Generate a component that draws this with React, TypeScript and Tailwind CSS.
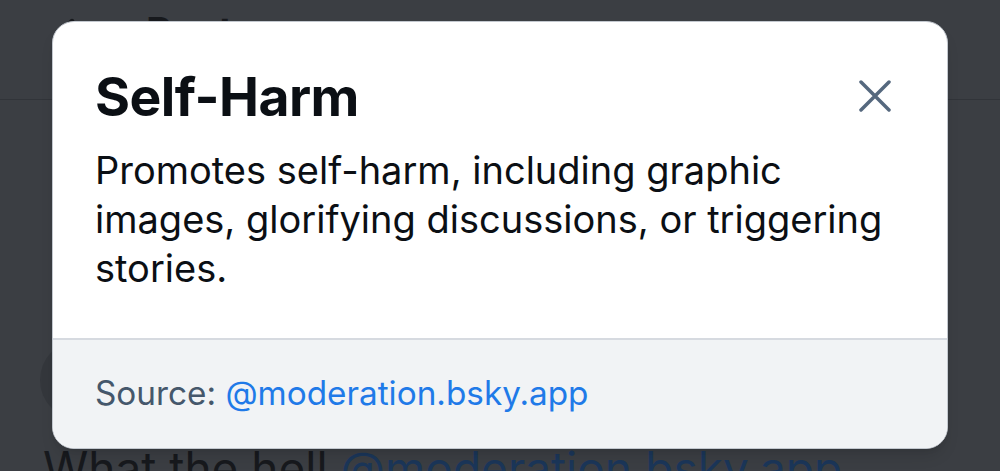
import { ArrowLeft, Ellipsis } from 'lucide-react';

export default function App() {
    return (
        <div className="relative w-[1000px] h-[471px] overflow-hidden bg-[#3b3e43] font-['Inter',sans-serif]">
            {/* dimmed page behind */}
            <div className="flex items-start h-[100px] border-b border-[#313439] pl-[52px] pr-[60px] pt-[12px] text-[#17191d]">
                <ArrowLeft size={40} strokeWidth={3} className="mt-[1px]" />
                <span className="ml-[54px] text-[40px] font-bold leading-none">Post</span>
                <Ellipsis size={44} strokeWidth={3.5} className="ml-auto -mt-[2px]" />
            </div>
            <div className="flex items-start px-[40px] pt-[240px]">
                <div className="w-[80px] h-[80px] rounded-full bg-[#34373c]" />
            </div>
            <div className="px-[43px] pt-[25px] text-[46px] text-[#17191d] leading-none whitespace-nowrap">
                What the hell <span className="text-[#1b3659]">@moderation.bsky.app</span>
            </div>

            {/* modal */}
            <div className="absolute left-[52px] top-[21px] w-[896px] h-[428px] rounded-[22px] border-[1.5px] border-[#c3c8cf] bg-white overflow-hidden flex flex-col shadow-lg">
                <div className="flex-1 px-[42px] pt-[48px]">
                    <div className="flex items-start justify-between">
                        <h1 className="text-[53.5px] font-bold leading-[1] tracking-[-0.01em] text-[#0b0f14]">Self-Harm</h1>
                        <svg width="32" height="32" viewBox="0 0 32 32" className="mt-[10px] mr-[14px] text-[#55687e]">
                            <path d="M2 2 L30 30 M30 2 L2 30" stroke="currentColor" strokeWidth="3.5" strokeLinecap="round" />
                        </svg>
                    </div>
                    <p className="mt-[22px] text-[38px] leading-[49px] text-[#0b0f14]">
                        Promotes self-harm, including graphic images, glorifying discussions, or triggering stories.
                    </p>
                </div>
                <div className="h-[110px] border-t-2 border-[#d6dae0] bg-[#f1f3f5] px-[42px] flex items-center">
                    <span className="text-[33.3px] text-[#45576b]">
                        Source: <span className="text-[#1f7ae8]">@moderation.bsky.app</span>
                    </span>
                </div>
            </div>
        </div>
    );
}
